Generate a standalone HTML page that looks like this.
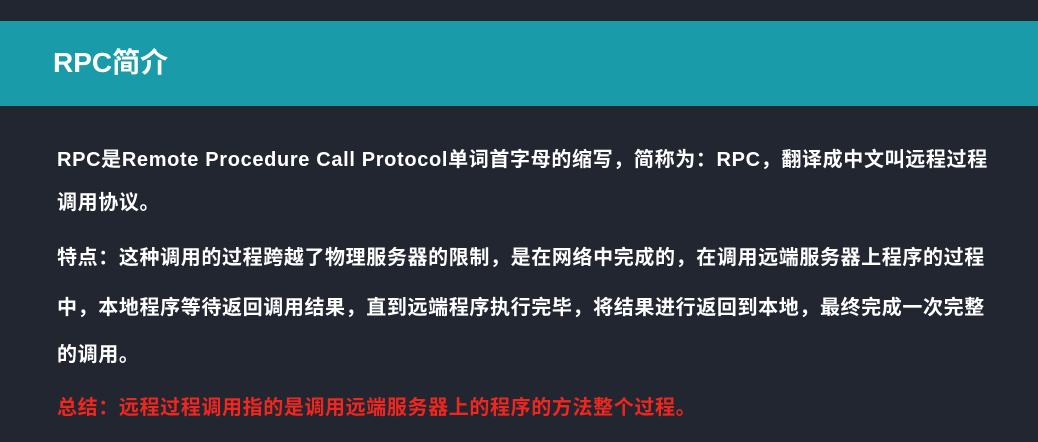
<!DOCTYPE html>
<html><head><meta charset="utf-8"><style>
html,body{margin:0;padding:0}
body{width:1038px;height:442px;background:#222631;position:relative;overflow:hidden;font-family:"Liberation Sans","Noto Sans CJK SC",sans-serif;font-weight:bold;color:#fff}
.hdr{position:absolute;left:0;top:21px;width:1038px;height:85px;background:#1a9ba9}
.title{position:absolute;left:53px;top:46px;font-size:28px;line-height:34px;color:#fff}
.l{position:absolute;left:57px;font-size:20px;line-height:26px;letter-spacing:0.62px;white-space:nowrap}
.red{color:#f0261f}
</style></head><body>
<div class="hdr"></div>
<div class="title">RPC简介</div>
<div class="l" style="top:147px;letter-spacing:0.65px">RPC是Remote Procedure Call Protocol单词首字母的缩写，简称为：RPC，翻译成中文叫远程过程</div>
<div class="l" style="top:190px">调用协议。</div>
<div class="l" style="top:245px">特点：这种调用的过程跨越了物理服务器的限制，是在网络中完成的，在调用远端服务器上程序的过程</div>
<div class="l" style="top:295px">中，本地程序等待返回调用结果，直到远端程序执行完毕，将结果进行返回到本地，最终完成一次完整</div>
<div class="l" style="top:342px">的调用。</div>
<div class="l red" style="top:395px">总结：远程过程调用指的是调用远端服务器上的程序的方法整个过程。</div>
</body></html>
